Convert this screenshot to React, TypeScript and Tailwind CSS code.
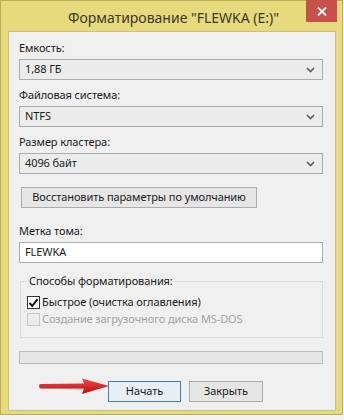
import React from 'react';

const font = { fontFamily: '"Noto Sans", "Open Sans", sans-serif' };

function Chevron() {
  return (
    <svg width="9" height="6" viewBox="0 0 9 6" className="shrink-0">
      <path d="M1 1 L4.5 4.5 L8 1" fill="none" stroke="#5a5a5a" strokeWidth="1.6" />
    </svg>
  );
}

function Select({ value }: { value: string }) {
  return (
    <div className="h-[21px] w-full border border-[#acacac] bg-[#ececec] flex items-center justify-between pl-[5px] pr-[7px] text-[11px] tracking-[-0.1px] text-[#1a1a1a]">
      <span>{value}</span>
      <Chevron />
    </div>
  );
}

function Label({ children }: { children: React.ReactNode }) {
  return <div className="h-[16px] leading-[16px] text-[11px] tracking-[-0.1px] text-[#1a1a1a] mb-[3px]">{children}</div>;
}

export default function App() {
  return (
    <div className="w-[344px] h-[420px] bg-[#f3f3f3] overflow-hidden relative" style={font}>
      <div className="w-[343px] h-[415px] bg-[#e6da7d] border border-[#b9ae5d] flex flex-col relative">
        {/* title bar */}
        <div className="h-[30px] flex items-center justify-center pl-[4px] pt-[2px] text-[14px] text-[#3a3828]">
          Форматирование "FLEWKA (E:)"
        </div>
        <div className="absolute top-[-1px] right-[5px] w-[31px] h-[22px] bg-[#c7504c] flex items-center justify-center">
          <svg width="10" height="9" viewBox="0 0 10 9">
            <path d="M1 0.5 L9 8.5 M9 0.5 L1 8.5" stroke="#ffffff" strokeWidth="1.8" />
          </svg>
        </div>

        {/* client area */}
        <div className="ml-[7px] w-[328px] h-[380px] border border-[#c8c08a] bg-[#f0f0f0] pl-[10px] pr-[12px] pt-[8px] flex flex-col relative">
          <Label>Емкость:</Label>
          <Select value="1,88 ГБ" />

          <div className="mt-[7px]"><Label>Файловая система:</Label></div>
          <Select value="NTFS" />

          <div className="mt-[7px]"><Label>Размер кластера:</Label></div>
          <Select value="4096 байт" />

          <div className="mt-[13px] ml-[2px] w-[236px] h-[21px] border border-[#acacac] bg-[#e6e6e6] flex items-center justify-center text-[11px] tracking-[-0.1px] text-[#1a1a1a] whitespace-nowrap">
            Восстановить параметры по умолчанию
          </div>

          <div className="mt-[15px]"><Label>Метка тома:</Label></div>
          <div className="h-[21px] w-full border border-[#abadb3] bg-white flex items-center pl-[5px] text-[11px] tracking-[-0.1px] text-[#1a1a1a]">
            FLEWKA
          </div>

          <fieldset className="mt-[10px] ml-[1px] border border-[#dcdcdc] px-[6px] pt-[5px] pb-[9px]">
            <legend className="px-[2px] h-[16px] leading-[16px] text-[11px] tracking-[-0.1px] text-[#1a1a1a]">
              Способы форматирования:
            </legend>
            <div className="h-[17px] flex items-center gap-[2px] text-[11px] tracking-[-0.1px] text-[#1a1a1a]">
              <div className="w-[13px] h-[13px] border border-[#333333] bg-white flex items-center justify-center">
                <svg width="11" height="10" viewBox="0 0 11 10">
                  <path d="M1.5 5 L4.2 8 L9.5 1.2" fill="none" stroke="#111111" strokeWidth="2" />
                </svg>
              </div>
              <span>Быстрое (очистка оглавления)</span>
            </div>
            <div className="h-[17px] flex items-center gap-[2px] text-[11px] tracking-[-0.1px] text-[#a3a3a3]">
              <div className="w-[13px] h-[13px] border border-[#c8c8c8] bg-[#ececec]" />
              <span>Создание загрузочного диска MS-DOS</span>
            </div>
          </fieldset>

          <div className="mt-[13px] h-[13px] w-full border border-[#bcbcbc] bg-[#e6e6e6]" />

          <div className="mt-[17px] flex gap-[8px] pl-[89px]">
            <div className="w-[73px] h-[21px] border border-[#3c7fb1] bg-[#e8eef3] flex items-center justify-center text-[11px] tracking-[-0.1px] text-[#1a1a1a]">
              Начать
            </div>
            <div className="w-[74px] h-[21px] border border-[#acacac] bg-[#e6e6e6] flex items-center justify-center text-[11px] tracking-[-0.1px] text-[#1a1a1a]">
              Закрыть
            </div>
          </div>

          {/* red arrow annotation */}
          <svg className="absolute left-[28px] top-[345px]" width="74" height="20" viewBox="0 0 74 20">
            <defs>
              <linearGradient id="ar" x1="0" y1="0" x2="0" y2="1">
                <stop offset="0" stopColor="#f04a4a" />
                <stop offset="1" stopColor="#b81010" />
              </linearGradient>
            </defs>
            <path d="M3 11 L50 10 L50 13.5 Z" fill="#8a8a8a" opacity="0.35" />
            <path d="M2 9 Q2 7 4 7 L47 6.5 L45 1.5 L72 9 L45 17 L47 11.5 L4 11.5 Q2 11.5 2 9 Z" fill="url(#ar)" />
          </svg>
        </div>
      </div>
      <div className="h-[5px] bg-[#f3f3f3]" />
    </div>
  );
}
